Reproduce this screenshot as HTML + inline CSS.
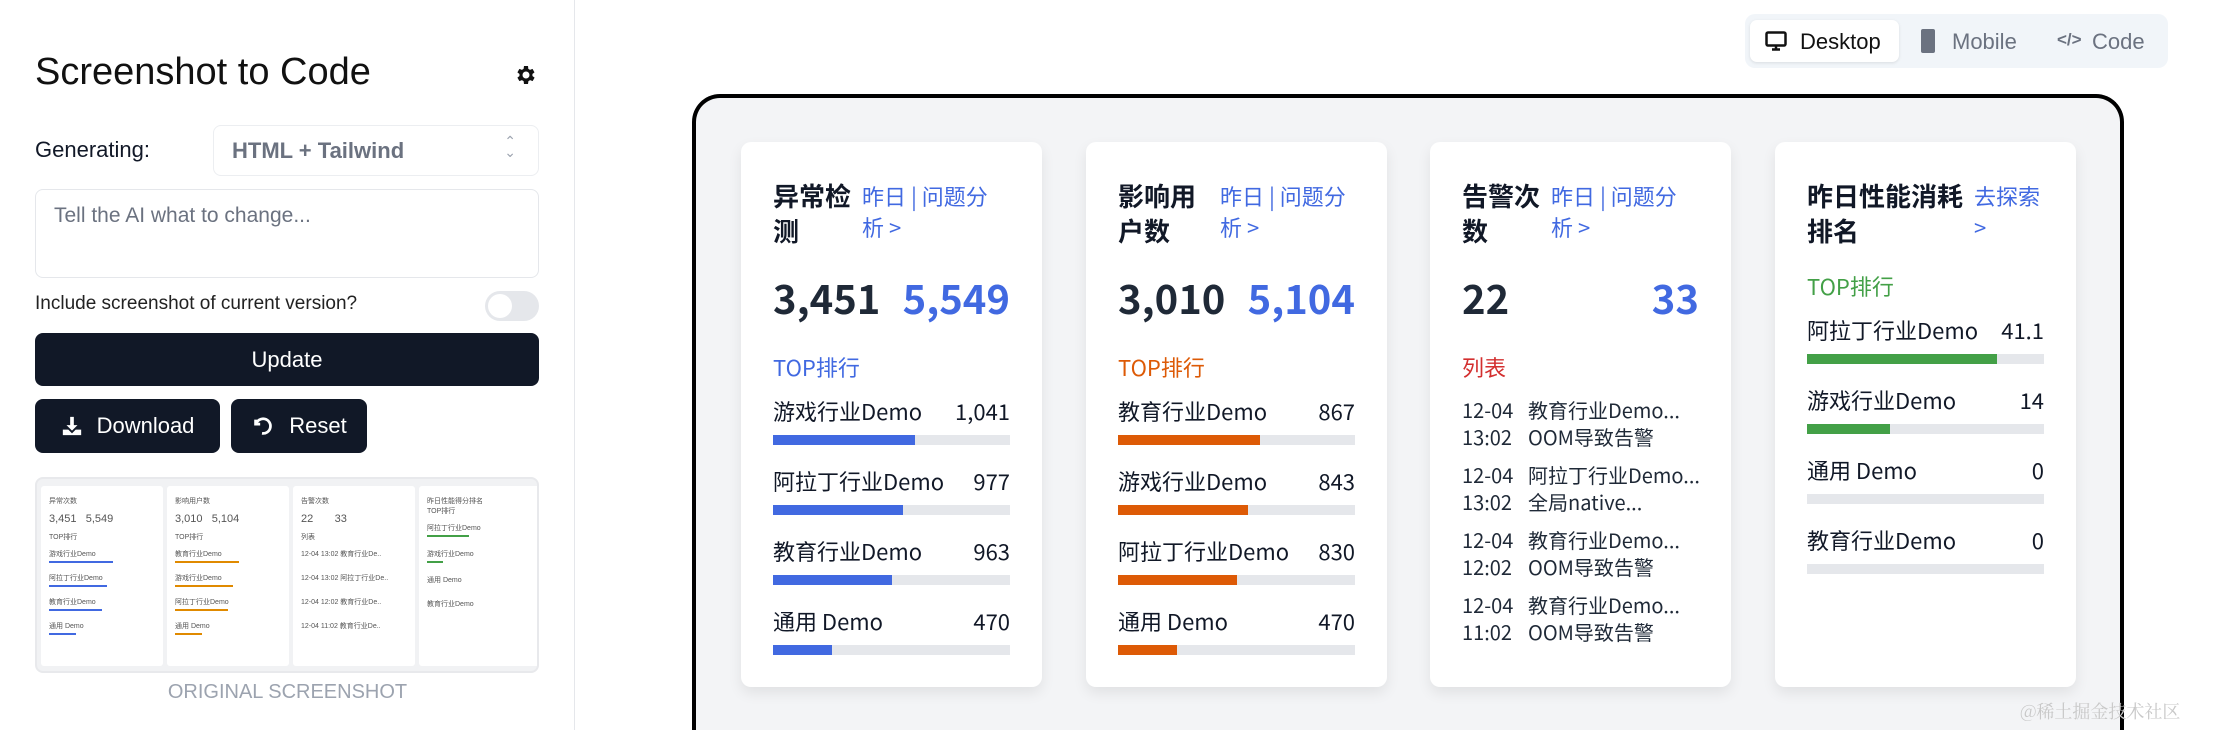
<!DOCTYPE html>
<html style="width:2225px;height:730px;overflow:hidden"><head><meta charset="utf-8"><style>
*{box-sizing:border-box;margin:0;padding:0}
body{width:2225px;height:730px;overflow:hidden;background:#fff;font-family:"Liberation Sans","Noto Sans CJK SC",sans-serif;position:relative;color:#111827}
#wrap{position:relative;width:2225px;height:730px;overflow:hidden}
.abs{position:absolute}
.side{left:0;top:0;width:575px;height:730px;border-right:1px solid #e5e7eb}
.btn{background:#111827;color:#fff;border-radius:8px;display:flex;align-items:center;justify-content:center;font-size:22px}
.frame{left:692px;top:94px;width:1432px;height:636px;border:4px solid #000;border-bottom:none;border-radius:28px 28px 0 0;background:#f3f4f6;overflow:hidden;font-family:"Noto Sans CJK SC","Liberation Sans",sans-serif}
.card{position:absolute;top:44px;width:301px;height:545px;background:#fff;border-radius:10px;box-shadow:0 6px 14px rgba(0,0,0,.08);padding:36px 32px 0 32px}
.hd{display:flex;gap:11px}
.tt{font-size:26px;font-weight:bold;line-height:35px;color:#111827;white-space:nowrap}
.lk{font-size:22px;line-height:31px;color:#4169e1;padding-top:3px;white-space:nowrap}
.nums{display:flex;justify-content:space-between;font-size:40px;font-weight:bold;margin-top:22px;line-height:54px;color:#1f2937}
.nums .b{color:#4169e1}
.sec{font-size:22px;margin-top:28px;line-height:30px}
.row{margin-top:14px}
.rl{display:flex;justify-content:space-between;font-size:22px;line-height:30px;color:#111827}
.bar{height:10px;background:#e5e7eb;margin-top:9px;margin-bottom:21px}
.bar i{display:block;height:100%}
.li{font-size:20px;line-height:27px;margin-bottom:11px;display:grid;grid-template-columns:66px auto;color:#1f2937;white-space:nowrap}
.tcard{position:absolute;top:7px;width:122px;height:180px;background:#fff;border-radius:3px;padding:10px 8px;font-size:7px;color:#555}
</style></head><body><div id="wrap">
<div class="abs side">
 <div class="abs" style="left:35px;top:51px;font-size:38px;color:#111">Screenshot to Code</div>
 <svg class="abs" style="left:514px;top:63px" width="24" height="24" viewBox="0 0 24 24"><path fill="#111" d="M19.4 13a7.5 7.5 0 000-2l2.1-1.6-2-3.5-2.5 1a7.6 7.6 0 00-1.7-1L15 3h-4l-.4 2.9a7.6 7.6 0 00-1.7 1l-2.5-1-2 3.5L6.5 11a7.5 7.5 0 000 2l-2.1 1.6 2 3.5 2.5-1a7.6 7.6 0 001.7 1L11 21h4l.4-2.9a7.6 7.6 0 001.7-1l2.5 1 2-3.5zM13 15.5a3.5 3.5 0 110-7 3.5 3.5 0 010 7z" transform="translate(-1 0)"/></svg>
 <div class="abs" style="left:35px;top:137px;font-size:22px">Generating:</div>
 <div class="abs" style="left:213px;top:125px;width:326px;height:51px;border:1px solid #eceef1;border-radius:8px;font-size:22px;font-weight:bold;color:#6b7280;padding:12px 18px">HTML + Tailwind<span style="position:absolute;right:22px;top:10px;font-size:14px;color:#9ca3af;font-weight:normal;line-height:11px">⌃<br>⌄</span></div>
 <div class="abs" style="left:35px;top:189px;width:504px;height:89px;border:1px solid #e5e7eb;border-radius:8px;font-size:21px;color:#6b7280;padding:14px 18px">Tell the AI what to change...</div>
 <div class="abs" style="left:35px;top:293px;font-size:19px;color:#222">Include screenshot of current version?</div>
 <div class="abs" style="left:485px;top:291px;width:54px;height:30px;border-radius:15px;background:#e5e7eb"><div style="position:absolute;left:3px;top:3px;width:24px;height:24px;border-radius:12px;background:#fff"></div></div>
 <div class="abs btn" style="left:35px;top:333px;width:504px;height:53px">Update</div>
 <div class="abs btn" style="left:35px;top:399px;width:185px;height:54px">
  <svg width="22" height="22" viewBox="0 0 24 24" style="margin-right:14px"><path fill="#fff" d="M10 2h4v9h4l-6 6-6-6h4zM2 16h6l4 4 4-4h6v6H2z"/></svg>Download</div>
 <div class="abs btn" style="left:231px;top:399px;width:136px;height:54px">
  <svg width="22" height="22" viewBox="0 0 24 24" style="margin-right:16px"><path fill="none" stroke="#fff" stroke-width="3" d="M5 5v5h5M5.5 10A8 8 0 1112 20"/></svg>Reset</div>
 <div class="abs" style="left:35px;top:477px;width:504px;height:196px;background:#f1f2f4;border-radius:8px;border:2px solid #e8e9ec;overflow:hidden">
  <div class="tcard" style="left:4px">异常次数<br><br><span style="font-size:11px">3,451 &nbsp; 5,549</span><br><br>TOP排行<br><br>游戏行业Demo<div style="height:2px;width:60%;background:#4169e1;margin:2px 0 10px"></div>阿拉丁行业Demo<div style="height:2px;width:55%;background:#4169e1;margin:2px 0 10px"></div>教育行业Demo<div style="height:2px;width:50%;background:#4169e1;margin:2px 0 10px"></div>通用 Demo<div style="height:2px;width:25%;background:#4169e1;margin:2px 0"></div></div>
  <div class="tcard" style="left:130px">影响用户数<br><br><span style="font-size:11px">3,010 &nbsp; 5,104</span><br><br>TOP排行<br><br>教育行业Demo<div style="height:2px;width:60%;background:#e08a00;margin:2px 0 10px"></div>游戏行业Demo<div style="height:2px;width:55%;background:#e08a00;margin:2px 0 10px"></div>阿拉丁行业Demo<div style="height:2px;width:50%;background:#e08a00;margin:2px 0 10px"></div>通用 Demo<div style="height:2px;width:25%;background:#e08a00;margin:2px 0"></div></div>
  <div class="tcard" style="left:256px">告警次数<br><br><span style="font-size:11px">22 &nbsp; &nbsp; &nbsp; 33</span><br><br>列表<br><br>12-04 13:02 教育行业De..<br><br><br>12-04 13:02 阿拉丁行业De..<br><br><br>12-04 12:02 教育行业De..<br><br><br>12-04 11:02 教育行业De..</div>
  <div class="tcard" style="left:382px">昨日性能得分排名<br>TOP排行<br><br>阿拉丁行业Demo<div style="height:2px;width:40%;background:#43a047;margin:2px 0 12px"></div>游戏行业Demo<div style="height:2px;width:15%;background:#43a047;margin:2px 0 12px"></div>通用 Demo<br><br><br>教育行业Demo</div>
 </div>
 <div class="abs" style="left:0;width:575px;text-align:center;top:681px;font-size:20px;color:#9ca3af">ORIGINAL SCREENSHOT</div>
</div>

<div class="abs" style="left:1745px;top:14px;width:423px;height:54px;background:#f1f5f9;border-radius:10px"></div>
<div class="abs" style="left:1750px;top:20px;width:149px;height:42px;background:#fff;border-radius:7px;box-shadow:0 1px 3px rgba(0,0,0,.1)"></div>
<svg class="abs" style="left:1765px;top:31px" width="22" height="20" viewBox="0 0 22 20"><rect x="1.5" y="1.5" width="19" height="13" rx="1.5" fill="none" stroke="#111" stroke-width="2.5"/><path d="M7 18.5h8M11 15v3" stroke="#111" stroke-width="2.5"/></svg>
<div class="abs" style="left:1800px;top:29px;font-size:22px;color:#111">Desktop</div>
<svg class="abs" style="left:1921px;top:29px" width="14" height="24"><rect x="0" y="0" width="14" height="24" rx="2" fill="#6b7280"/></svg>
<div class="abs" style="left:1952px;top:29px;font-size:22px;color:#6b7280">Mobile</div>
<div class="abs" style="left:2057px;top:30px;font-size:17px;font-weight:bold;color:#6b7280">&lt;/&gt;</div>
<div class="abs" style="left:2092px;top:29px;font-size:22px;color:#6b7280">Code</div>

<div class="abs frame">
 <div class="card" style="left:45px">
  <div class="hd"><div class="tt">异常检<br>测</div><div class="lk">昨日 | 问题分<br>析 &gt;</div></div>
  <div class="nums"><span>3,451</span><span class="b">5,549</span></div>
  <div class="sec" style="color:#4169e1">TOP排行</div>
  <div class="row"><div class="rl"><span>游戏行业Demo</span><span>1,041</span></div><div class="bar"><i style="width:60%;background:#4169e1"></i></div>
  <div class="rl"><span>阿拉丁行业Demo</span><span>977</span></div><div class="bar"><i style="width:55%;background:#4169e1"></i></div>
  <div class="rl"><span>教育行业Demo</span><span>963</span></div><div class="bar"><i style="width:50%;background:#4169e1"></i></div>
  <div class="rl"><span>通用 Demo</span><span>470</span></div><div class="bar"><i style="width:25%;background:#4169e1"></i></div></div>
 </div>
 <div class="card" style="left:390px">
  <div class="hd"><div class="tt">影响用<br>户数</div><div class="lk" style="margin-left:13px">昨日 | 问题分<br>析 &gt;</div></div>
  <div class="nums"><span>3,010</span><span class="b">5,104</span></div>
  <div class="sec" style="color:#dd5a06">TOP排行</div>
  <div class="row"><div class="rl"><span>教育行业Demo</span><span>867</span></div><div class="bar"><i style="width:60%;background:#dd5a06"></i></div>
  <div class="rl"><span>游戏行业Demo</span><span>843</span></div><div class="bar"><i style="width:55%;background:#dd5a06"></i></div>
  <div class="rl"><span>阿拉丁行业Demo</span><span>830</span></div><div class="bar"><i style="width:50%;background:#dd5a06"></i></div>
  <div class="rl"><span>通用 Demo</span><span>470</span></div><div class="bar"><i style="width:25%;background:#dd5a06"></i></div></div>
 </div>
 <div class="card" style="left:734px">
  <div class="hd"><div class="tt">告警次<br>数</div><div class="lk">昨日 | 问题分<br>析 &gt;</div></div>
  <div class="nums"><span>22</span><span class="b">33</span></div>
  <div class="sec" style="color:#d32f2f">列表</div>
  <div style="margin-top:14px">
   <div class="li"><span>12-04<br>13:02</span><span>教育行业Demo...<br>OOM导致告警</span></div>
   <div class="li"><span>12-04<br>13:02</span><span>阿拉丁行业Demo...<br>全局native...</span></div>
   <div class="li"><span>12-04<br>12:02</span><span>教育行业Demo...<br>OOM导致告警</span></div>
   <div class="li"><span>12-04<br>11:02</span><span>教育行业Demo...<br>OOM导致告警</span></div>
  </div>
 </div>
 <div class="card" style="left:1079px">
  <div class="hd"><div class="tt">昨日性能消耗<br>排名</div><div class="lk">去探索<br>&gt;</div></div>
  <div class="sec" style="color:#43a047;margin-top:23px">TOP排行</div>
  <div class="row"><div class="rl"><span>阿拉丁行业Demo</span><span>41.1</span></div><div class="bar"><i style="width:80%;background:#43a047"></i></div>
  <div class="rl"><span>游戏行业Demo</span><span>14</span></div><div class="bar"><i style="width:35%;background:#43a047"></i></div>
  <div class="rl"><span>通用 Demo</span><span>0</span></div><div class="bar"></div>
  <div class="rl"><span>教育行业Demo</span><span>0</span></div><div class="bar"></div></div>
 </div>
</div>
<div class="abs" style="left:2020px;top:698px;font-size:18px;color:#c8c8c8;font-family:'Noto Serif CJK SC',serif">@稀土掘金技术社区</div>
</div></body></html>
